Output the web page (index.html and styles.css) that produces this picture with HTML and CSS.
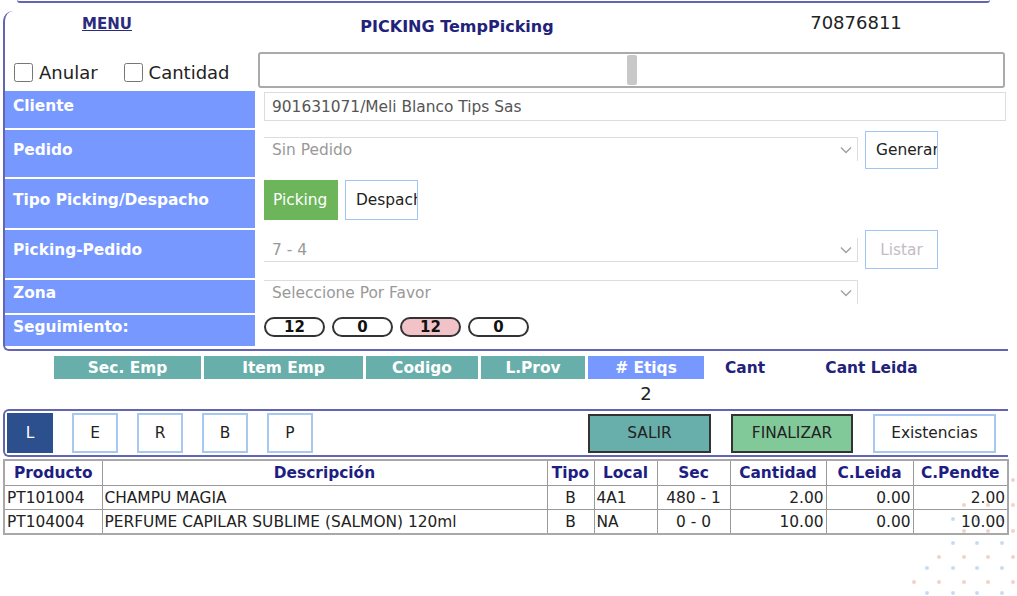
FILE: index.html
```html
<!DOCTYPE html>
<html lang="es">
<head>
  <meta charset="UTF-8" />
  <meta name="viewport" content="width=device-width, initial-scale=1.0"/>
  <title>PICKING TempPicking</title>
  <link rel="stylesheet" href="styles.css">
</head>
<body>
  <div class="top-line"></div>

  <div class="main-box">
    <div class="title-row">
      <a href="#" class="menu-link">MENU</a>
      <span class="page-title">PICKING TempPicking</span>
      <span class="doc-number">70876811</span>
    </div>

    <div class="scan-row">
      <label class="check-group"><input type="checkbox" />Anular</label>
      <label class="check-group second"><input type="checkbox" />Cantidad</label>
      <div class="scan-box">
        <input type="text" class="scan-input" autocomplete="off" />
        <span class="scan-caret"></span>
      </div>
    </div>

    <div class="form-grid">
      <div class="field-label">Cliente</div>
      <div class="field-value">
        <input class="text-field" value="901631071/Meli Blanco Tips Sas" readonly />
      </div>

      <div class="field-label">Pedido</div>
      <div class="field-value">
        <div class="select-box line-top sel-pedido">
          <select><option>Sin Pedido</option></select>
          <svg width="12" height="8" viewBox="0 0 12 8"><path d="M1 1.5l5 5 5-5" fill="none" stroke="#a0a0a0" stroke-width="1.4"/></svg>
        </div>
        <button class="opt-btn">Generar</button>
      </div>

      <div class="field-label">Tipo Picking/Despacho</div>
      <div class="field-value">
        <button class="opt-btn tipo active">Picking</button>
        <button class="opt-btn tipo">Despacho</button>
      </div>

      <div class="field-label">Picking-Pedido</div>
      <div class="field-value">
        <div class="select-box line-bottom sel-picking">
          <select><option>7 - 4</option></select>
          <svg width="12" height="8" viewBox="0 0 12 8"><path d="M1 1.5l5 5 5-5" fill="none" stroke="#a0a0a0" stroke-width="1.4"/></svg>
        </div>
        <button class="opt-btn listar" disabled>Listar</button>
      </div>

      <div class="field-label">Zona</div>
      <div class="field-value">
        <div class="select-box line-top sel-zona">
          <select><option>Seleccione Por Favor</option></select>
          <svg width="12" height="8" viewBox="0 0 12 8"><path d="M1 1.5l5 5 5-5" fill="none" stroke="#a0a0a0" stroke-width="1.4"/></svg>
        </div>
      </div>

      <div class="field-label">Seguimiento:</div>
      <div class="field-value">
        <span class="pill">12</span>
        <span class="pill">0</span>
        <span class="pill pink">12</span>
        <span class="pill">0</span>
      </div>
    </div>
  </div>

  <div class="scan-grid">
    <div class="head-cell">Sec. Emp</div>
    <div class="head-cell">Item Emp</div>
    <div class="head-cell">Codigo</div>
    <div class="head-cell">L.Prov</div>
    <div class="head-cell blue">Etiqs</div>
    <div class="head-text">Cant</div>
    <div class="head-text">Cant Leida</div>
    <div class="value-cell etiqs">2</div>
  </div>

  <div class="action-box">
    <button class="key-btn active">L</button>
    <button class="key-btn">E</button>
    <button class="key-btn">R</button>
    <button class="key-btn">B</button>
    <button class="key-btn">P</button>
    <button class="cmd-btn salir">SALIR</button>
    <button class="cmd-btn finalizar">FINALIZAR</button>
    <button class="cmd-btn existencias">Existencias</button>
  </div>

  <table class="items-table">
    <colgroup>
      <col style="width: 98px">
      <col style="width: 445px">
      <col style="width: 47px">
      <col style="width: 63px">
      <col style="width: 73px">
      <col style="width: 96px">
      <col style="width: 87px">
      <col style="width: 95px">
    </colgroup>
    <thead>
      <tr>
        <th>Producto</th>
        <th>Descripción</th>
        <th>Tipo</th>
        <th>Local</th>
        <th>Sec</th>
        <th>Cantidad</th>
        <th>C.Leida</th>
        <th>C.Pendte</th>
      </tr>
    </thead>
    <tbody>
      <tr>
        <td>PT101004</td>
        <td>CHAMPU MAGIA</td>
        <td class="center">B</td>
        <td>4A1</td>
        <td class="center">480 - 1</td>
        <td class="num">2.00</td>
        <td class="num">0.00</td>
        <td class="num">2.00</td>
      </tr>
      <tr>
        <td>PT104004</td>
        <td>PERFUME CAPILAR SUBLIME (SALMON) 120ml</td>
        <td class="center">B</td>
        <td>NA</td>
        <td class="center">0 - 0</td>
        <td class="num">10.00</td>
        <td class="num">0.00</td>
        <td class="num">10.00</td>
      </tr>
    </tbody>
  </table>

  <svg class="dots" width="117" height="126" viewBox="900 470 117 126">
    <g fill="#f2d2c9">
      <circle cx="1013" cy="480" r="2"/>
      <circle cx="964" cy="505" r="2"/><circle cx="988" cy="505" r="2"/><circle cx="1013" cy="505" r="2"/>
      <circle cx="964" cy="531" r="2"/><circle cx="988" cy="531" r="2"/><circle cx="1013" cy="531" r="2"/>
      <circle cx="939" cy="557" r="2"/><circle cx="964" cy="557" r="2"/><circle cx="988" cy="557" r="2"/><circle cx="1013" cy="557" r="2"/>
      <circle cx="914" cy="582" r="2"/><circle cx="939" cy="582" r="2"/><circle cx="964" cy="582" r="2"/><circle cx="988" cy="582" r="2"/><circle cx="1013" cy="582" r="2"/>
    </g>
    <g fill="#cadcf2">
      <circle cx="953" cy="519" r="2"/><circle cx="977" cy="519" r="2"/><circle cx="1002" cy="519" r="2"/>
      <circle cx="953" cy="543" r="2"/><circle cx="977" cy="543" r="2"/><circle cx="1002" cy="543" r="2"/>
      <circle cx="927" cy="568" r="2"/><circle cx="953" cy="568" r="2"/><circle cx="977" cy="568" r="2"/><circle cx="1002" cy="568" r="2"/>
      <circle cx="927" cy="593" r="2"/><circle cx="953" cy="593" r="2"/><circle cx="977" cy="593" r="2"/><circle cx="1002" cy="593" r="2"/>
    </g>
  </svg>
</body>
</html>
```

FILE: styles.css
```css
body {
  margin: 0;
  font-family: Verdana, "DejaVu Sans", sans-serif;
  font-size: 15.4px;
  color: #222;
  background: #fff;
  overflow: hidden;
}

.top-line {
  height: 1px;
  margin: 0 27px 0 17px;
  border-bottom: 2px solid #6464b4;
  border-radius: 0 0 8px 8px;
}

.main-box {
  width: 1003px;
  margin: 8px 0 0 3px;
  padding-bottom: 3px;
  border-left: 2px solid #6464b4;
  border-bottom: 2px solid #6464b4;
  border-radius: 10px 0 0 6px;
}

.title-row {
  display: grid;
  grid-template-columns: 204px 496px 302px;
  align-items: start;
  justify-items: center;
  height: 39px;
}

.menu-link {
  margin-top: 4px;
  font-size: 15px;
  line-height: 18px;
  font-weight: bold;
  color: #2b2b7d;
}

.page-title {
  margin-top: 6px;
  font-size: 16px;
  line-height: 19px;
  font-weight: bold;
  color: #22227a;
}

.doc-number {
  margin-top: 1px;
  font-size: 18px;
  line-height: 21px;
}

.scan-row {
  display: flex;
  align-items: center;
  height: 39px;
  padding-left: 8px;
}

.check-group {
  display: flex;
  align-items: center;
  gap: 6px;
  margin-top: 5px;
  font-size: 18px;
}

.check-group input {
  width: 19px;
  height: 19px;
  margin: 0 0 0 1px;
}

.check-group.second {
  margin-left: 25px;
}

.scan-box {
  position: relative;
  box-sizing: border-box;
  width: 747px;
  height: 36px;
  margin: 0 3px 0 auto;
  border: 2px solid #aaa;
  border-radius: 3px;
}

.scan-input {
  box-sizing: border-box;
  width: 100%;
  height: 100%;
  border: none;
  outline: none;
  background: transparent;
}

.scan-caret {
  position: absolute;
  left: 367px;
  top: 1px;
  width: 10px;
  height: 30px;
  background: #c8c8c8;
  border-radius: 2px;
}

.form-grid {
  display: grid;
  grid-template-columns: 250px 1fr;
  grid-template-rows: 37px 47px 49px 48px 33px 31px;
  row-gap: 2px;
  margin-top: 2px;
}

.field-label {
  display: flex;
  align-items: center;
  padding: 0 0 8px 8px;
  background: #7799ff;
  color: #fff;
  font-weight: bold;
}

.field-value {
  display: flex;
  align-items: flex-start;
  gap: 7px;
  padding: 1px 0 0 9px;
}

.text-field {
  box-sizing: border-box;
  width: 742px;
  height: 29px;
  margin: 0;
  padding: 0 7px;
  border: 1px solid #ddd;
  font: inherit;
  color: #555;
  outline: none;
}

.select-box {
  display: flex;
  align-items: center;
  box-sizing: border-box;
  width: 594px;
  height: 24px;
  border-right: 1px solid #ddd;
}

.select-box.line-top { border-top: 1px solid #ddd; }
.select-box.line-bottom { border-bottom: 1px solid #ddd; }

.sel-pedido { margin-top: 6px; }
.sel-picking { margin-top: 7px; }
.sel-zona { margin-top: -1px; }

.select-box select {
  flex: 1;
  height: 100%;
  margin: 0;
  padding: 0 0 0 8px;
  border: none;
  outline: none;
  background: transparent;
  appearance: none;
  font: inherit;
  color: #999;
}

.select-box svg {
  margin-right: 5px;
}

.opt-btn {
  box-sizing: border-box;
  width: 73px;
  height: 38px;
  margin: 0;
  padding: 0 10px;
  border: 1px solid #9fc5f5;
  background: #fff;
  font: inherit;
  color: #222;
  text-align: left;
  white-space: nowrap;
  overflow: hidden;
}

.opt-btn.tipo {
  height: 40px;
}

.opt-btn.active {
  width: 74px;
  padding: 0 8px;
  border-color: #6cb55a;
  background: #6cb55a;
  color: #fff;
}

.opt-btn.listar {
  height: 39px;
  margin-top: -1px;
  text-align: center;
  color: #c4bcc4;
}

.pill {
  box-sizing: border-box;
  width: 61px;
  height: 20px;
  margin-top: 1px;
  border: 2px solid #333;
  border-radius: 10px;
  background: #fff;
  font-size: 15px;
  line-height: 16px;
  font-weight: bold;
  text-align: center;
  color: #111;
}

.pill.pink {
  background: #f1c3c8;
}

.scan-grid {
  display: grid;
  grid-template-columns: 147px 159px 112px 104px 116px 76px 171px;
  grid-template-rows: 23px 26px;
  column-gap: 3px;
  row-gap: 2px;
  margin: 5px 0 0 54px;
}

.head-cell {
  background: #68aeaa;
  color: #fff;
  font-weight: bold;
  text-align: center;
  line-height: 24px;
}

.head-cell.blue {
  background: #7799ff;
}

.head-cell.blue::before {
  content: "# ";
}

.head-text {
  color: #22227a;
  font-weight: bold;
  text-align: center;
  line-height: 24px;
}

.value-cell.etiqs {
  grid-column: 5;
  font-size: 18px;
  line-height: 26px;
  text-align: center;
}

.action-box {
  display: flex;
  align-items: center;
  box-sizing: border-box;
  width: 1005px;
  height: 48px;
  margin: 2px 0 0 3px;
  padding: 0 12px 0 2px;
  border: 2px solid #6464b4;
  border-right: none;
  border-radius: 6px 0 0 6px;
}

.key-btn {
  width: 46px;
  height: 40px;
  margin: 0 19px 0 0;
  padding: 0;
  border: 2px solid #a6c8f2;
  background: #fff;
  font: inherit;
  color: #222;
}

.key-btn.active {
  border-color: #2c4f8e;
  background: #2c4f8e;
  color: #fff;
}

.cmd-btn {
  width: 123px;
  height: 39px;
  margin: 0 0 0 20px;
  padding: 0;
  font: inherit;
  color: #222;
}

.cmd-btn.salir {
  margin-left: auto;
  border: 2px solid #333;
  background: #68aeaa;
}

.cmd-btn.finalizar {
  width: 122px;
  border: 2px solid #333;
  background: #82c99a;
}

.cmd-btn.existencias {
  border: 2px solid #a6c8f2;
  background: #fff;
}

.items-table {
  width: 1004px;
  margin: 2px 0 0 3px;
  border-collapse: collapse;
  border: 2px solid #a8a8a8;
  table-layout: fixed;
}

.items-table th,
.items-table td {
  padding: 0 2px;
  border: 1px solid #9a9a9a;
  white-space: nowrap;
  overflow: hidden;
}

.items-table th {
  height: 24px;
  color: #1e1e82;
  font-weight: bold;
  text-align: center;
}

.items-table td {
  height: 23px;
  text-align: left;
}

.items-table td.center { text-align: center; }
.items-table td.num { text-align: right; }

.dots {
  position: absolute;
  left: 900px;
  top: 470px;
  z-index: -1;
}
```
